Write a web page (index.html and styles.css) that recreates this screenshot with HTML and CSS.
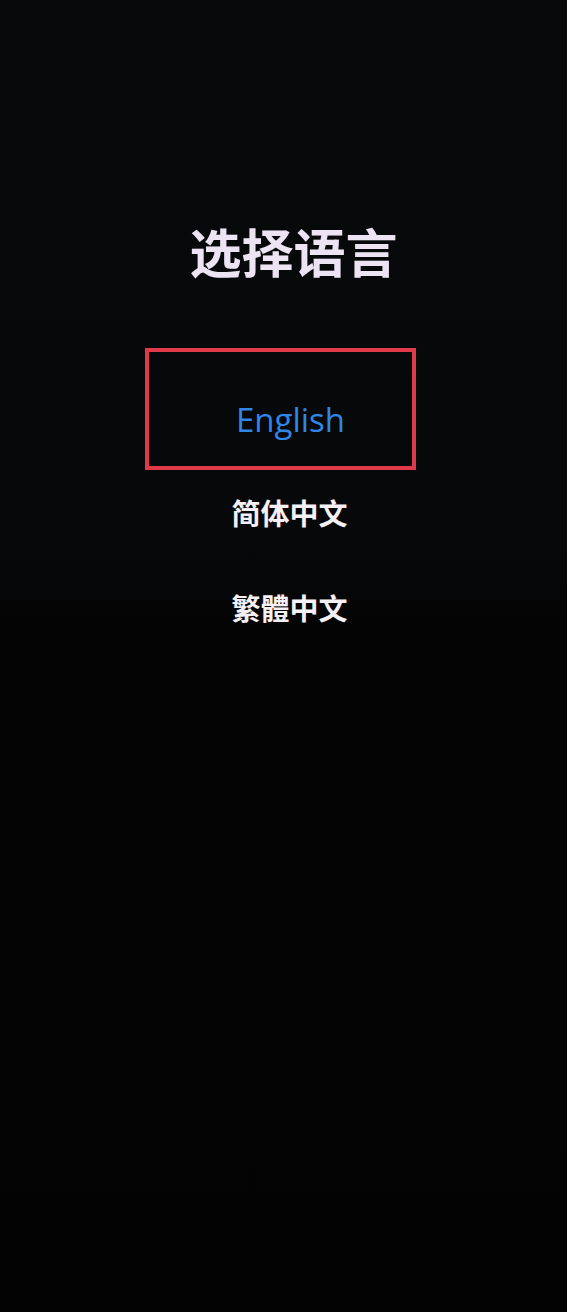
FILE: index.html
```html
<!DOCTYPE html>
<html>
  <head>
    <meta charset="utf-8">
    <title>选择语言</title>
    <link rel="stylesheet" href="styles.css">
  </head>
  <body>
    <div id="screen">
      <h1 class="title">选择语言</h1>
      <ul id="languages">
        <li class="lang lang-en selected">English</li>
        <li class="lang">简体中文</li>
        <li class="lang">繁體中文</li>
      </ul>
    </div>
  </body>
</html>
```

FILE: styles.css
```css
html, body {
  margin: 0;
  padding: 0;
}

body {
  height: 1312px;
  background: linear-gradient(to bottom, #08090b 0%, #070809 42%, #040405 48%, #030303 100%);
  font-family: "Noto Sans CJK SC", "Noto Sans", sans-serif;
}

#screen {
  display: flex;
  flex-direction: column;
  align-items: center;
  padding-top: 225px;
}

.title {
  margin: 0;
  margin-left: 20px;
  font-size: 52px;
  line-height: 52px;
  font-weight: 700;
  color: #ece3f3;
}

#languages {
  list-style: none;
  margin: 71px 0 0 0;
  padding: 0;
  display: flex;
  flex-direction: column;
  align-items: center;
}

.lang {
  margin-left: 12px;
  font-size: 29px;
  line-height: 40px;
  font-weight: 700;
  color: #f4f0f6;
}

.lang + .lang {
  margin-top: 55px;
}

.lang-en {
  box-sizing: border-box;
  width: 271px;
  height: 122px;
  margin-left: -6px;
  padding-left: 20px;
  padding-top: 22px;
  display: flex;
  align-items: center;
  justify-content: center;
  border: 4px solid #e03a4a;
  font-family: "Open Sans", "Noto Sans", sans-serif;
  font-size: 33px;
  font-weight: 500;
  color: #2f86e6;
}

.lang-en + .lang {
  margin-top: 22px;
}
```
